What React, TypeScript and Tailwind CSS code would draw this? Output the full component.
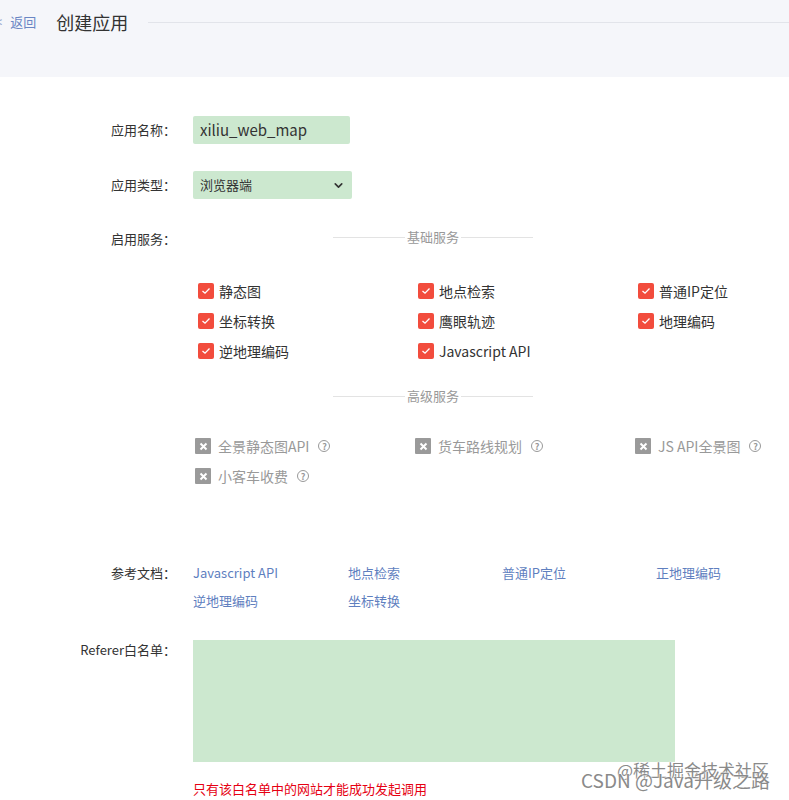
import React from 'react';
import { ChevronDown } from 'lucide-react';

const basic = ['静态图', '地点检索', '普通IP定位', '坐标转换', '鹰眼轨迹', '地理编码', '逆地理编码', 'Javascript API'];
const advanced = ['全景静态图API', '货车路线规划', 'JS API全景图', '小客车收费'];
const docs = ['Javascript API', '地点检索', '普通IP定位', '正地理编码', '逆地理编码', '坐标转换'];

function Label({ children }: { children: React.ReactNode }) {
  return <div className="w-[176px] shrink-0 text-right text-[13px] text-[#333]">{children}</div>;
}

function Divider({ title }: { title: string }) {
  return (
    <div className="relative ml-[140px] w-[200px] h-[20px] flex items-center justify-center">
      <div className="absolute left-0 right-0 top-1/2 h-px bg-[#e3e3e3]" />
      <span className="relative px-[2px] text-[13px] text-[#999] bg-white">{title}</span>
    </div>
  );
}

function Checked({ label }: { label: string }) {
  return (
    <div className="flex items-center h-[30px] gap-[5px]">
      <span className="w-[16px] h-[16px] rounded-[2px] bg-[#f24c3d] flex items-center justify-center">
        <svg width="10" height="8" viewBox="0 0 10 8" fill="none">
          <polyline points="1.5,4 4,6.2 8.5,1.5" stroke="#fff" strokeWidth="1.3" />
        </svg>
      </span>
      <span className="text-[14px] text-[#333]">{label}</span>
    </div>
  );
}

function Disabled({ label }: { label: string }) {
  return (
    <div className="flex items-center h-[30px] gap-[7px]">
      <span className="w-[16px] h-[16px] rounded-[1px] bg-[#9a9a9a] flex items-center justify-center">
        <svg width="9" height="9" viewBox="0 0 9 9" fill="none">
          <path d="M1.5 1.5 L7.5 7.5 M7.5 1.5 L1.5 7.5" stroke="#fff" strokeWidth="2" />
        </svg>
      </span>
      <span className="text-[14px] text-[#999]">{label}</span>
      <span className="ml-[2px] w-[12px] h-[12px] rounded-full border border-[#999] text-[#999] text-[9px] leading-none flex items-center justify-center font-bold">
        ?
      </span>
    </div>
  );
}

export default function App() {
  return (
    <div className="relative min-h-[800px] bg-white font-['Noto_Sans_CJK_SC','Noto_Sans',sans-serif] overflow-hidden">
      <header className="h-[77px] bg-[#f5f6fa] pt-[8px]">
        <div className="flex items-center h-[28px]">
          <span className="-ml-[5px] text-[13px] text-[#8da0c8]">&lt;</span>
          <a className="ml-[8px] text-[13px] text-[#6a86c4]">返回</a>
          <h1 className="ml-[20px] text-[18px] text-[#333]">创建应用</h1>
          <div className="ml-[20px] flex-1 h-px bg-[#e2e4ea]" />
        </div>
      </header>

      <div className="pt-[39px]">
        <div className="flex items-center h-[28px]">
          <Label>应用名称：</Label>
          <div className="ml-[17px] w-[157px] h-[28px] bg-[#cce8cf] rounded-[2px] flex items-center px-[7px] text-[15px] text-[#333]">
            xiliu_web_map
          </div>
        </div>

        <div className="flex items-center h-[28px] mt-[27px]">
          <Label>应用类型：</Label>
          <div className="ml-[17px] w-[159px] h-[28px] bg-[#cce8cf] rounded-[2px] flex items-center justify-between px-[7px] text-[13px] text-[#333]">
            <span>浏览器端</span>
            <ChevronDown size={13} strokeWidth={3} className="text-[#333]" />
          </div>
        </div>

        <div className="flex mt-[27px]">
          <Label>
            <span className="leading-[26px]">启用服务：</span>
          </Label>
          <div className="ml-[17px] flex-1">
            <div className="mt-[1px]">
              <Divider title="基础服务" />
            </div>
            <div className="mt-[29px] ml-[5px] grid grid-cols-[220px_220px_140px]">
              {basic.map((b) => (
                <Checked key={b} label={b} />
              ))}
            </div>
            <div className="mt-[20px]">
              <Divider title="高级服务" />
            </div>
            <div className="mt-[25px] ml-[2px] grid grid-cols-[220px_220px_160px]">
              {advanced.map((a) => (
                <Disabled key={a} label={a} />
              ))}
            </div>
          </div>
        </div>

        <div className="flex mt-[68px]">
          <Label>
            <span className="leading-[28px]">参考文档：</span>
          </Label>
          <div className="ml-[17px] grid grid-cols-[155px_154px_154px_120px]">
            {docs.map((d) => (
              <a key={d} className="h-[28px] leading-[28px] text-[13px] text-[#5f7fbf]">
                {d}
              </a>
            ))}
          </div>
        </div>

        <div className="flex mt-[25px]">
          <Label>
            <span className="leading-[16px]">Referer白名单：</span>
          </Label>
          <div className="ml-[17px]">
            <div className="w-[482px] h-[122px] bg-[#cce8cf]" />
            <p className="mt-[17px] text-[13px] text-[#e60012]">只有该白名单中的网站才能成功发起调用</p>
          </div>
        </div>
      </div>

      <div className="absolute right-[19px] bottom-[11px] text-right text-[#8a8a8a] [text-shadow:0_0_2px_#fff,0_0_2px_#fff] leading-none">
        <div className="text-[17px] mr-[1px]">@稀土掘金技术社区</div>
        <div className="text-[19px] -mt-[8px]">CSDN @Java升级之路</div>
      </div>
    </div>
  );
}
